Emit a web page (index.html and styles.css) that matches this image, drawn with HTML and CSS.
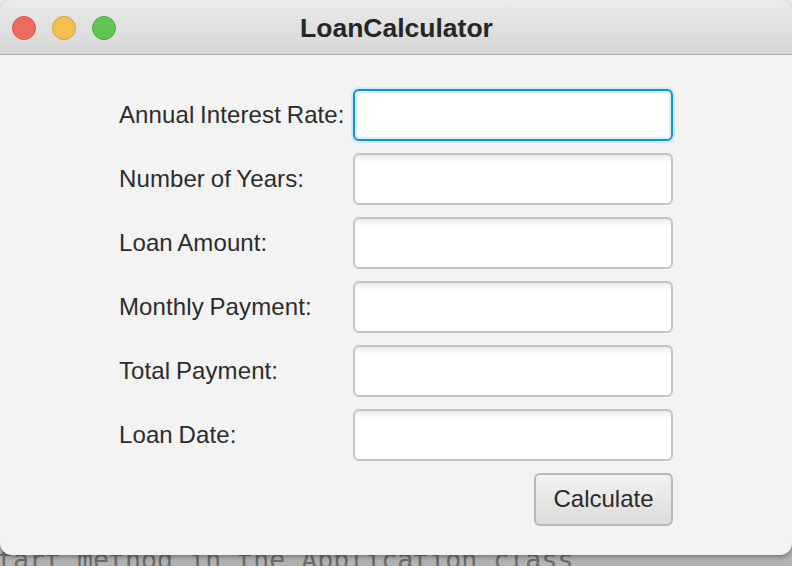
FILE: index.html
```html
<!DOCTYPE html>
<html>
<head>
<meta charset="utf-8">
<link rel="stylesheet" href="styles.css">
</head>
<body>
<div class="window">
  <div class="titlebar">
    <div class="lights">
      <span class="light red"></span>
      <span class="light yellow"></span>
      <span class="light green"></span>
    </div>
    <div class="title">LoanCalculator</div>
  </div>
  <div class="content">
    <div class="form">
      <label class="label">Annual Interest Rate:</label>
      <div class="field focused"></div>
      <label class="label">Number of Years:</label>
      <div class="field"></div>
      <label class="label">Loan Amount:</label>
      <div class="field"></div>
      <label class="label">Monthly Payment:</label>
      <div class="field"></div>
      <label class="label">Total Payment:</label>
      <div class="field"></div>
      <label class="label">Loan Date:</label>
      <div class="field"></div>
      <button class="button">Calculate</button>
    </div>
  </div>
</div>
<div class="behind">start method in the Application class</div>
</body>
</html>
```
FILE: styles.css
```css
html, body {
  margin: 0;
  padding: 0;
}
body {
  width: 792px;
  height: 566px;
  overflow: hidden;
  background: #ededed;
  font-family: "Liberation Sans", Arial, sans-serif;
}
.window {
  position: relative;
  z-index: 1;
  width: 792px;
  height: 555px;
  border-radius: 12px;
  background: #f3f3f3;
  overflow: hidden;
  box-shadow: 0 2px 5px rgba(0,0,0,0.35);
  display: flex;
  flex-direction: column;
}
.titlebar {
  position: relative;
  height: 54px;
  flex: none;
  background: linear-gradient(#ebebeb, #d6d6d6);
  border-bottom: 1px solid #b2b2b2;
  display: flex;
  align-items: center;
  justify-content: center;
}
.lights {
  position: absolute;
  left: 12px;
  top: 16px;
  display: flex;
  gap: 16px;
}
.light {
  width: 24px;
  height: 24px;
  border-radius: 50%;
  box-sizing: border-box;
}
.red { background: #ee6a5f; border: 1px solid #d5544a; }
.yellow { background: #f5be4f; border: 1px solid #d9a23a; }
.green { background: #61c555; border: 1px solid #4ba83f; }
.title {
  font-size: 26.5px;
  font-weight: bold;
  color: #262626;
  margin-top: 2px;
  margin-left: 1px;
}
.content {
  flex: 1;
  padding: 34px 0 0 119px;
}
.form {
  display: grid;
  grid-template-columns: 234px 320px;
  grid-auto-rows: 52px;
  row-gap: 12px;
  align-items: center;
}
.label {
  font-size: 24px;
  color: #2c2c2c;
  letter-spacing: 0.1px;
  word-spacing: -1px;
}
.field {
  height: 52px;
  box-sizing: border-box;
  border: 2px solid #c4c4c4;
  border-radius: 6px;
  background: linear-gradient(#e9e9e9 0, #ffffff 7px);
}
.field.focused {
  border-color: #0e97d6;
  background: #ffffff;
  box-shadow: 0 0 0 2px #d3eaf6, inset 0 0 0 2px #ddeff8;
}
.button {
  grid-column: 2;
  justify-self: end;
  width: 139px;
  height: 53px;
  box-sizing: border-box;
  border: 2px solid #b8b8b8;
  border-radius: 6px;
  background: linear-gradient(#f2f2f2, #dcdcdc);
  font-family: "Liberation Sans", Arial, sans-serif;
  font-size: 24px;
  color: #2a2a2a;
  padding: 0;
}
.behind {
  margin-top: -15px;
  height: 26px;
  padding-top: 4px;
  text-indent: -19px;
  background: #b3b3b3;
  font-family: "DejaVu Sans Mono", monospace;
  font-size: 26.6px;
  line-height: 31px;
  color: #6c6c6c;
  white-space: nowrap;
  overflow: hidden;
}
```
